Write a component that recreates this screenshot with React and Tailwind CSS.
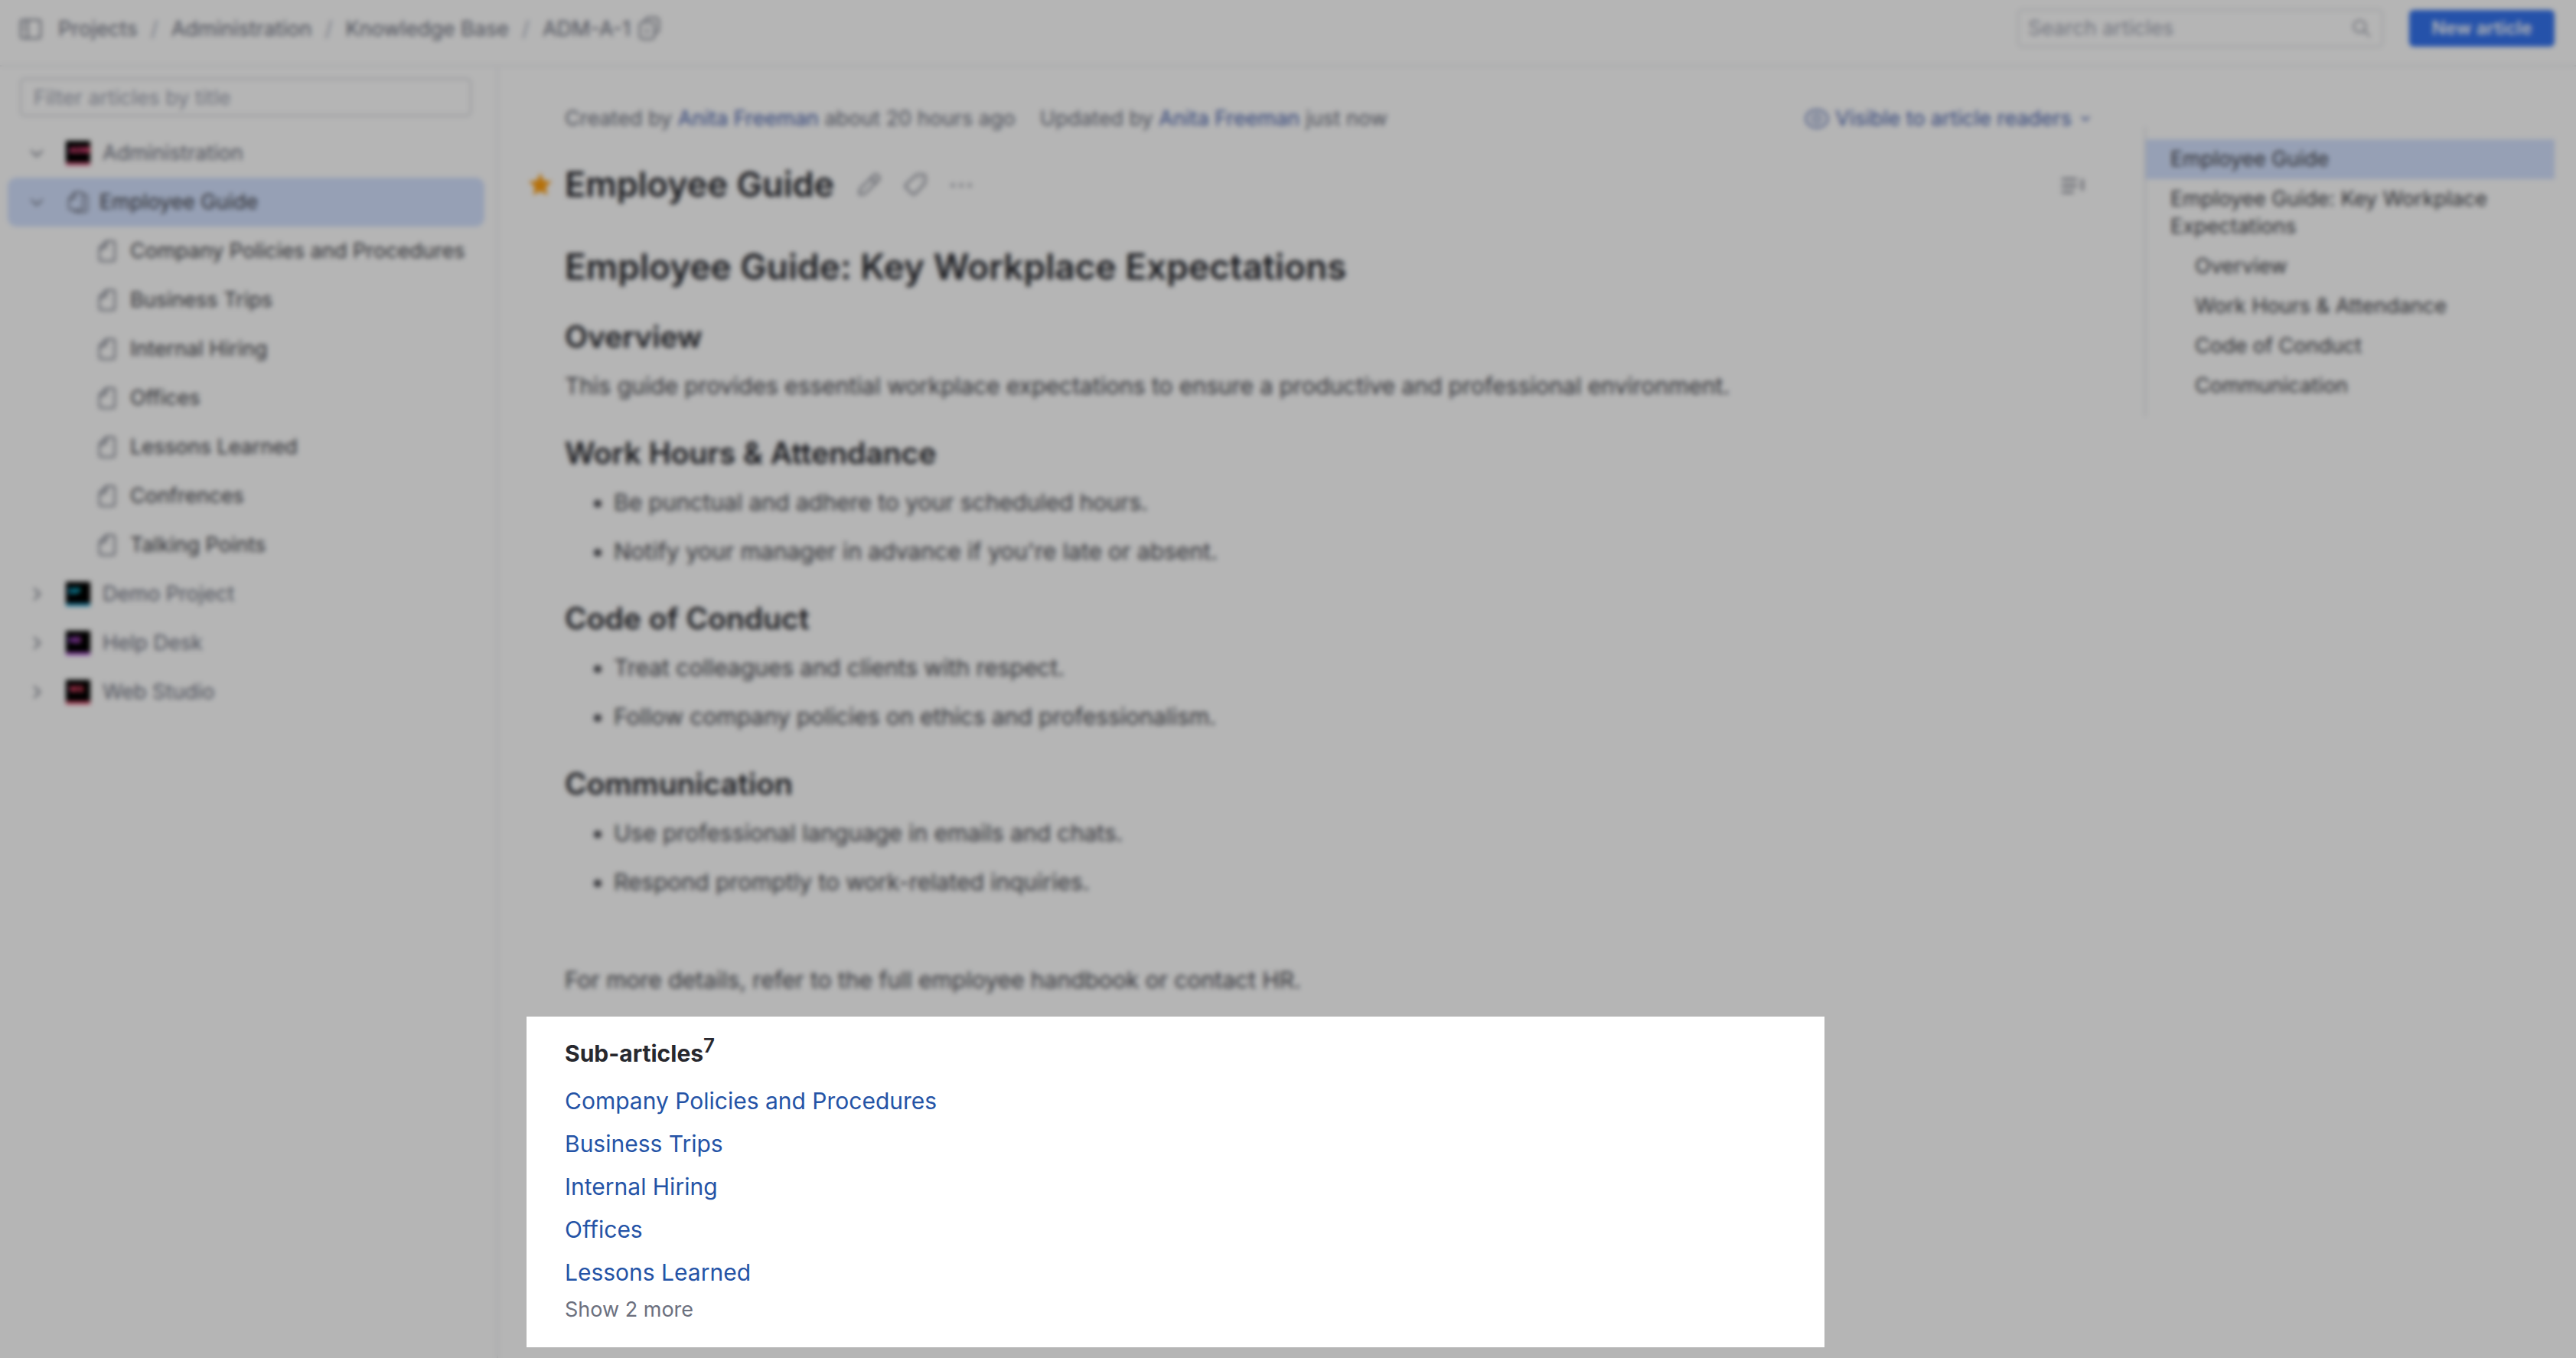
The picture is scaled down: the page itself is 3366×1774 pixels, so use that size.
const subArticles = ["Company Policies and Procedures", "Business Trips", "Internal Hiring", "Offices", "Lessons Learned", "Confrences", "Talking Points"];

const projects = [
	{ name: "Demo Project", short: "DP", text: "text-[#16d0f5]", bar: "bg-[#1ba0cf]" },
	{ name: "Help Desk", short: "HD", text: "text-[#cf5cf5]", bar: "bg-[#b653dc]" },
	{ name: "Web Studio", short: "WS", text: "text-[#ff5078]", bar: "bg-[#e8486c]" },
];

const sections = [
	{ title: "Work Hours & Attendance", items: ["Be punctual and adhere to your scheduled hours.", "Notify your manager in advance if you're late or absent."] },
	{ title: "Code of Conduct", items: ["Treat colleagues and clients with respect.", "Follow company policies on ethics and professionalism."] },
	{ title: "Communication", items: ["Use professional language in emails and chats.", "Respond promptly to work-related inquiries."] },
];

const Icon = ({ children, className = "size-8" }) => (
	<svg viewBox="0 0 16 16" fill="none" stroke="currentColor" strokeWidth="1" strokeLinecap="round" strokeLinejoin="round" className={`shrink-0 ${className}`} aria-hidden="true">
		{children}
	</svg>
);

const Chevron = ({ open }) => (
	<Icon className="size-8 text-[#6c707e]">
		<path d={open ? "M4.5 6.5l3.5 3.5 3.5-3.5" : "M6.5 4.5L10 8l-3.5 3.5"} />
	</Icon>
);

const ArticleIcon = () => (
	<Icon className="size-8 text-[#6c707e]">
		<path d="M8 1.500h4A1.500 1.500 0 0 1 13.500 3v10a1.500 1.500 0 0 1-1.500 1.500H5A1.500 1.500 0 0 1 3.500 13V6z M8 1.500V4.500A1.500 1.500 0 0 1 6.500 6H3.500" />
	</Icon>
);

const ProjectBadge = ({ short, text, bar }) => (
	<span className="flex size-8 shrink-0 flex-col justify-between bg-black">
		<span className={`pl-1 pt-1 text-[11px] leading-4 font-black ${text}`}>{short}</span>
		<span className={`h-1 ${bar}`} />
	</span>
);

const Header = () => (
	<header className="flex h-[87px] items-start justify-between border-b-2 border-[#ebecf0] pl-6 pr-7 pt-3">
		<nav className="flex h-[52px] items-center text-[#6c707e]" aria-label="Breadcrumbs">
			<button aria-label="Toggle sidebar">
				<Icon>
					<rect x="1.500" y="2" width="13" height="12" rx="1.500" />
					<path d="M6 2v12M3.500 5h.5M3.500 8h.5" />
				</Icon>
			</button>
			<a href="#projects" className="ml-5">Projects</a>
			<span className="w-11 text-center text-[#a8adbd]">/</span>
			<a href="#administration">Administration</a>
			<span className="w-11 text-center text-[#a8adbd]">/</span>
			<a href="#kb">Knowledge Base</a>
			<span className="w-11 text-center text-[#a8adbd]">/</span>
			<a href="#adm-a-1">ADM-A-1</a>
			<button className="ml-2" aria-label="Copy ID">
				<Icon>
					<rect x="2" y="3.500" width="9.500" height="11" rx="2" />
					<path d="M5.500 2.500A2 2 0 0 1 7.500.5H12.500a2 2 0 0 1 2 2v6a2 2 0 0 1-2 2M6.700 7.500v3.500" />
				</Icon>
			</button>
		</nav>
		<div className="flex items-center gap-[34px]">
			<label className="flex h-[50px] w-[478px] items-center rounded-md border-2 border-[#dfe1e5] px-3">
				<input className="min-w-0 flex-1 outline-none placeholder:text-[#a0a4b2]" placeholder="Search articles" aria-label="Search articles" />
				<Icon className="size-7 text-[#818594]">
					<circle cx="6.500" cy="6.500" r="4.500" />
					<path d="M10 10l4 4" />
				</Icon>
			</label>
			<button className="h-12 w-[190px] rounded-md bg-[#3574f0] text-[24px] font-semibold text-white">New article</button>
		</div>
	</header>
);

const Sidebar = () => (
	<aside className="w-[651px] shrink-0 border-r-2 border-[#ebecf0] px-2.5 pt-[15px]">
		<input className="mx-4 h-[50px] w-[590px] rounded-md border-2 border-[#d3d5db] px-4 outline-none placeholder:text-[#a0a4b2]" placeholder="Filter articles by title" aria-label="Filter articles by title" />
		<ul className="mr-1.5 mt-4 text-[#3c3d44]">
			<li className="flex h-16 items-center pl-[22px] text-[#6c707e]">
				<Chevron open />
				<span className="ml-[22px] mr-4">
					<ProjectBadge short="ADM" text="text-[#ff4f8c]" bar="bg-[#e0527e]" />
				</span>
				<a href="#administration">Administration</a>
			</li>
			<li className="flex h-16 items-center rounded-xl bg-[#d4e2ff] pl-[22px]">
				<Chevron open />
				<span className="ml-[22px] mr-3 text-[#6c707e]">
					<Icon>
						<path d="M6 1.500h3.500A1.500 1.500 0 0 1 11 3v8.500A1.500 1.500 0 0 1 9.500 13H3.500A1.500 1.500 0 0 1 2 11.500V6z M6 1.500V4.500A1.500 1.500 0 0 1 4.500 6H2 M11 3h1.500A1.500 1.500 0 0 1 14 4.500V13a1.500 1.500 0 0 1-1.500 1.500H7A1.500 1.500 0 0 1 5.500 13" />
					</Icon>
				</span>
				<a href="#employee-guide">Employee Guide</a>
			</li>
			{subArticles.map((title) => (
				<li key={title} className="flex h-16 items-center gap-[15px] pl-[113px]">
					<ArticleIcon />
					<a href="#article" className="whitespace-nowrap">{title}</a>
				</li>
			))}
			{projects.map((project) => (
				<li key={project.name} className="flex h-16 items-center pl-[22px] text-[#6c707e]">
					<Chevron />
					<span className="ml-[22px] mr-4">
						<ProjectBadge {...project} />
					</span>
					<a href="#project">{project.name}</a>
				</li>
			))}
		</ul>
	</aside>
);

const SubArticles = () => (
	<section className="relative z-20 -ml-[50px] mr-[347px] mt-4 bg-white px-[50px] pb-7 pt-6 text-[30px]">
		<h4 className="mb-2.5 flex h-12 items-center font-bold">
			Sub-articles<span className="self-start text-[26px] leading-7 font-semibold">7</span>
		</h4>
		<ul>
			{subArticles.slice(0, 5).map((title) => (
				<li key={title} className="leading-[56px]">
					<a href="#article" className="text-[#2453a6]">{title}</a>
				</li>
			))}
		</ul>
		<button className="block text-[27px] leading-[42px] text-[#6c707e]">Show 2 more</button>
	</section>
);

const Article = () => (
	<main className="min-w-0 flex-1 pb-3.5 pl-[87px] pt-[50px]">
		<div className="flex items-center justify-between leading-9 text-[#6c707e]">
			<div className="flex gap-8">
				<span>Created by <a href="#user" className="text-[#4660ac]">Anita Freeman</a> about 20 hours ago</span>
				<span>Updated by <a href="#user" className="text-[#4660ac]">Anita Freeman</a> just now</span>
			</div>
			<button className="flex items-center text-[#4660ac]">
				<Icon>
					<ellipse cx="8" cy="8" rx="7" ry="5.800" />
					<circle cx="8" cy="8" r="2.500" />
				</Icon>
				<span className="ml-2 mr-3">Visible to article readers</span>
				<Icon className="size-3">
					<path strokeWidth="2.500" d="M2 5l6 6 6-6" />
				</Icon>
			</button>
		</div>

		<div className="-ml-12 mt-10 flex h-14 items-center text-[#6c707e]">
			<svg viewBox="0 0 16 16" fill="#ff9f0f" className="mr-4 size-8" aria-label="Starred">
				<path d="M8 .5l2.200 5 5.300.5-4 3.600 1.200 5.400L8 12.200 3.300 15l1.200-5.400-4-3.600 5.300-.5z" />
			</svg>
			<h1 className="mr-[30px] text-[45px] font-semibold text-[#27282e]">Employee Guide</h1>
			<div className="flex gap-7">
				<button aria-label="Edit"><Icon><path d="M11 1.800a1.500 1.500 0 0 1 2.100 0l1.100 1.100a1.500 1.500 0 0 1 0 2.100L5 14.200l-3.500.3.300-3.500z M9 4l3 3" /></Icon></button>
				<button aria-label="Tag"><Icon><path d="M9 1.500h4A1.500 1.500 0 0 1 14.500 3v4L8 14a1.500 1.500 0 0 1-2.100 0L2 10a1.500 1.500 0 0 1 0-2.100z M11 5h.1" /></Icon></button>
				<button aria-label="More"><Icon><path strokeWidth="2" d="M2.500 8.500h.1M8 8.500h.1M13.500 8.500h.1" /></Icon></button>
			</div>
			<button className="ml-auto mr-1.5" aria-label="Toggle outline">
				<Icon><path strokeWidth="1.300" d="M1 4.500h9M1 8.800h9M1 13h7M14 5v6.500" /></Icon>
			</button>
		</div>

		<h2 className="mt-[47px] text-[46px] leading-[64px] font-semibold">Employee Guide: Key Workplace Expectations</h2>
		<h3 className="mb-2 mt-9 text-[39px] leading-[48px] font-semibold">Overview</h3>
		<p className="text-[30px] leading-[64px] text-[#45464d]">This guide provides essential workplace expectations to ensure a productive and professional environment.</p>
		{sections.map(({ title, items }) => (
			<section key={title} className="mt-8">
				<h3 className="mb-2 text-[39px] leading-[48px] font-semibold">{title}</h3>
				<ul className="list-disc pl-16 text-[30px] leading-[64px] text-[#45464d]">
					{items.map((item) => <li key={item}>{item}</li>)}
				</ul>
			</section>
		))}
		<p className="mt-16 text-[30px] leading-[64px] text-[#45464d]">For more details, refer to the full employee handbook or contact HR.</p>
		<SubArticles />
	</main>
);

const Outline = () => (
	<nav className="ml-[71px] mr-7 mt-[79px] w-[536px] shrink-0 self-start border-l-2 border-[#dfe1e5] pb-3.5 pt-4 leading-9 text-[#3c3d44]" aria-label="Outline">
		<a href="#employee-guide" className="block bg-[#d4e2ff] py-2 pl-8">Employee Guide</a>
		<a href="#expectations" className="block py-2 pl-8 pr-16">Employee Guide: Key Workplace Expectations</a>
		<a href="#overview" className="block py-2 pl-16">Overview</a>
		{sections.map(({ title }) => (
			<a key={title} href="#section" className="block py-2 pl-16">{title}</a>
		))}
	</nav>
);

const App = () => (
	<div className="relative flex min-h-screen flex-col bg-white font-['Inter',sans-serif] text-[27px] text-[#27282e]">
		<Header />
		<div className="flex flex-1">
			<Sidebar />
			<Article />
			<Outline />
		</div>
		{/* dims everything except the spotlighted sub-articles */}
		<div className="pointer-events-none absolute inset-0 z-10 bg-black/29 backdrop-blur-[3px]" />
	</div>
);

export default App;
